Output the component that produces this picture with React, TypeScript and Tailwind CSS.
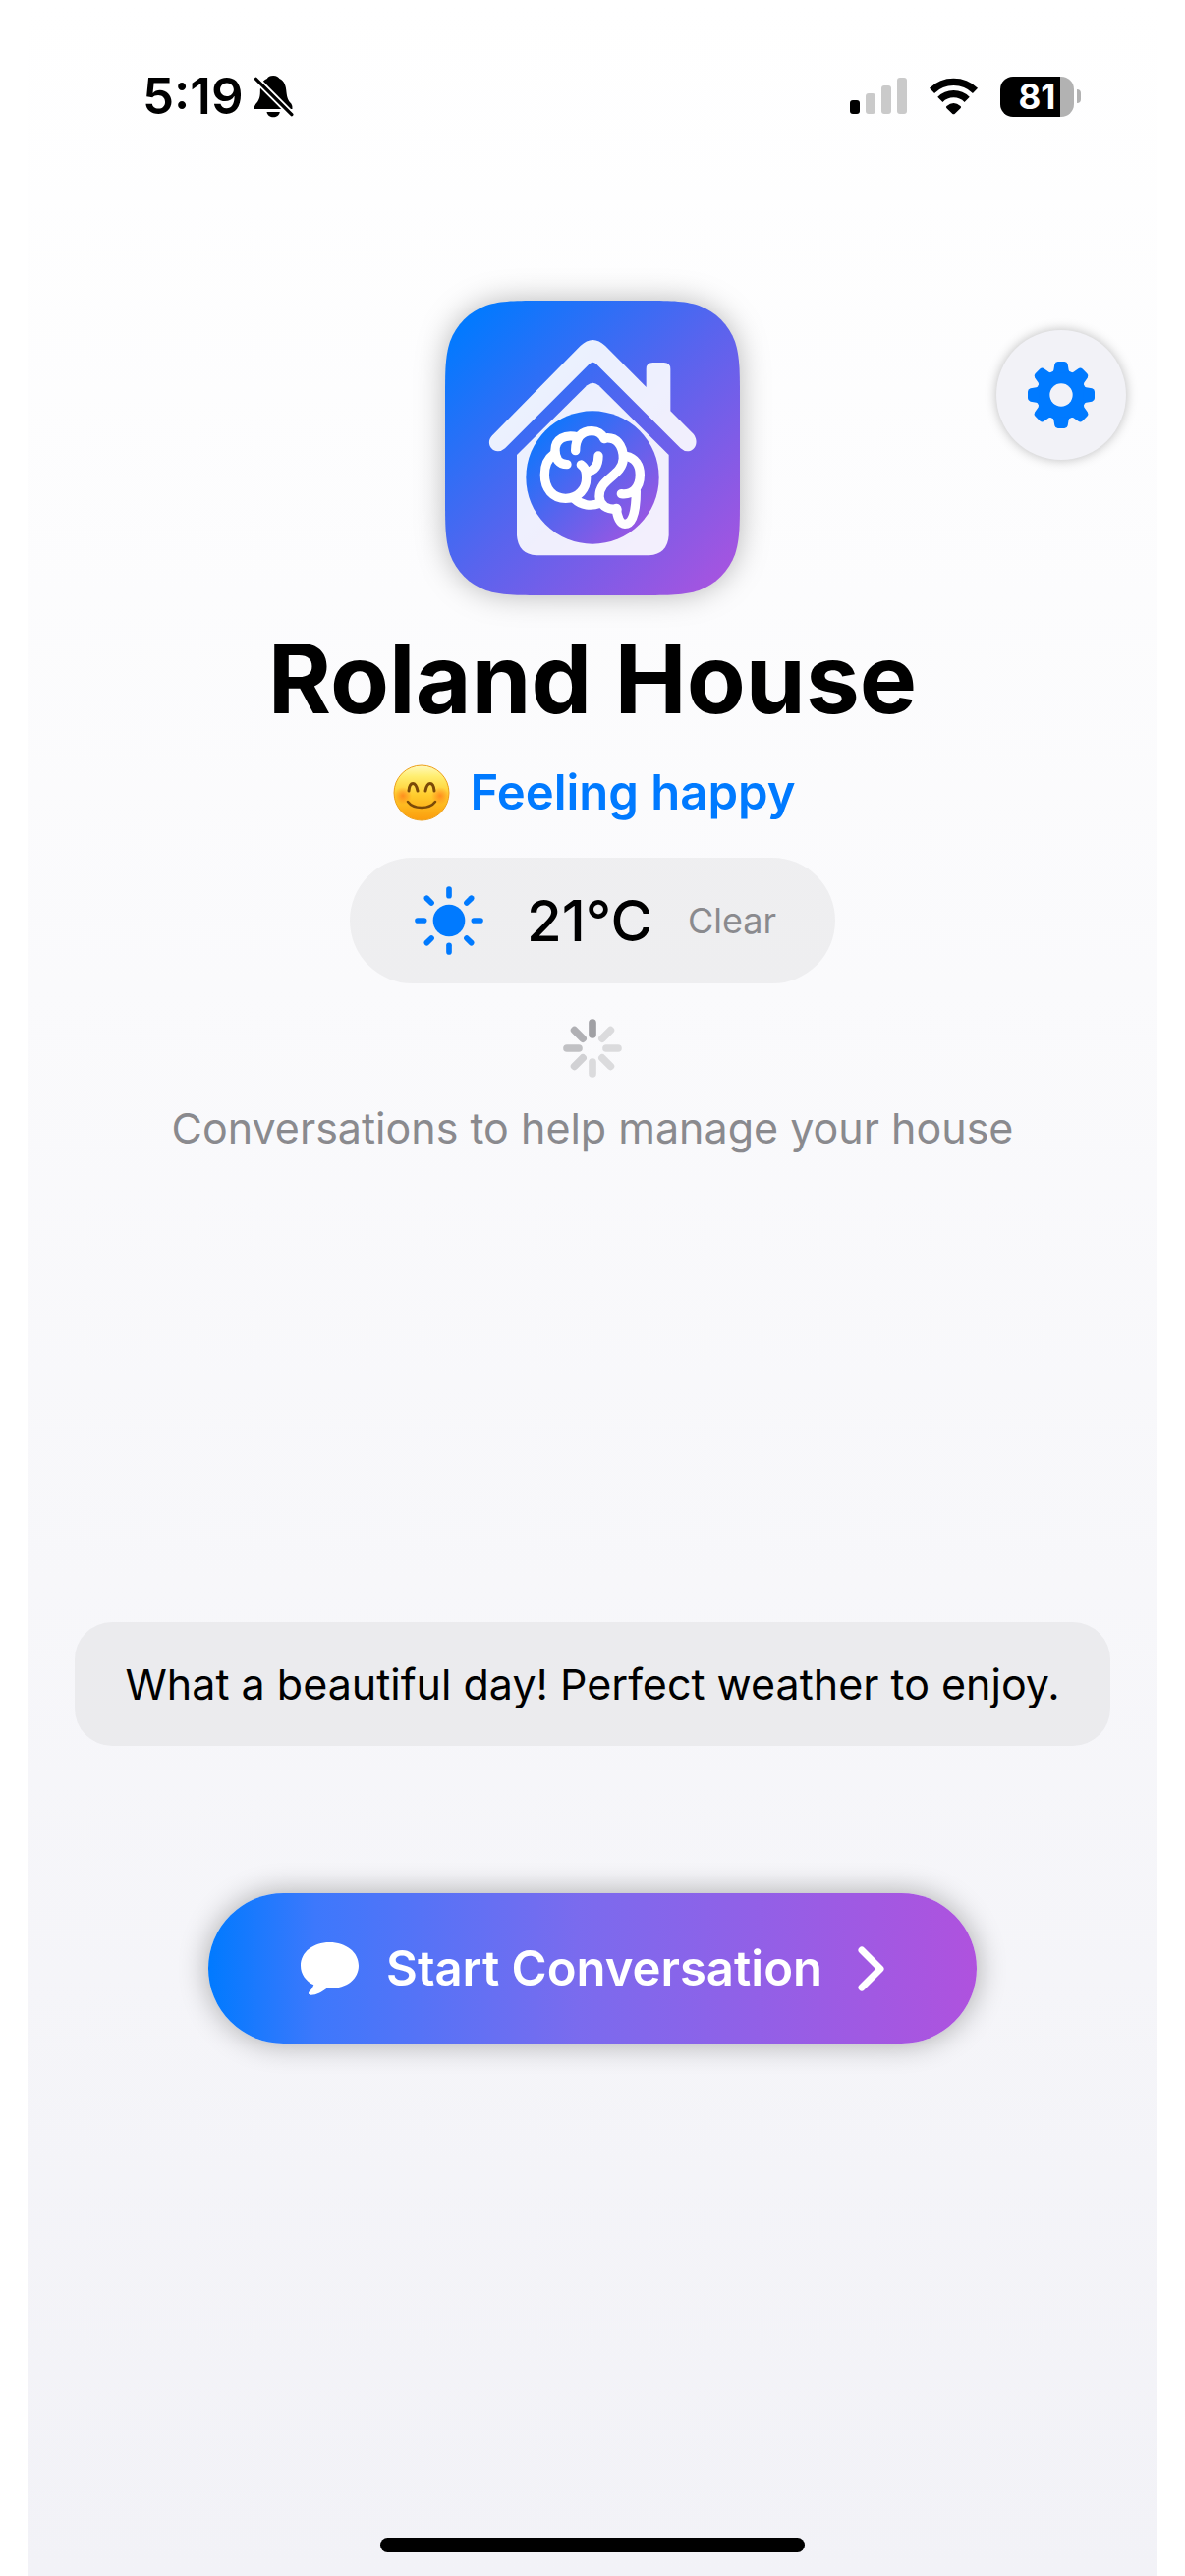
import React from "react";

/** Path of a rectangle with continuous (smoothed) corners of radius r. */
function smoothRect(x: number, y: number, w: number, h: number, r: number) {
  const steps = [
    [1.5287, 0],
    [1.0885, 0],
    [0.8684, 0],
    [0.6315, 0.0749],
    [0.3728, 0.1691],
    [0.1691, 0.3728],
    [0.0749, 0.6315],
    [0, 0.8684],
    [0, 1.0885],
    [0, 1.5287],
  ].map(([a, b]) => [a * r, b * r]);
  const corner = (pts: number[][]) => {
    const [p0, ...c] = pts.map(([a, b]) => a + " " + b);
    return `L${p0}C${c.slice(0, 3).join(" ")}C${c.slice(3, 6).join(" ")}C${c.slice(6, 9).join(" ")}`;
  };
  const back = [...steps].reverse();
  const tr = corner(steps.map(([a, b]) => [x + w - a, y + b]));
  const br = corner(back.map(([a, b]) => [x + w - a, y + h - b]));
  const bl = corner(steps.map(([a, b]) => [x + a, y + h - b]));
  const tl = corner(back.map(([a, b]) => [x + a, y + b]));
  return `M${x + w / 2} ${y}${tr}${br}${bl}${tl}Z`;
}

function BellSlash() {
  return (
    <svg viewBox="414 78 122 132" className="h-[44px] w-[41px]" role="img" aria-label="Silent mode">
      <path d="M474 81C484 81 490 86 493 90C508 97 513 113 514 132C516 150 520 158 529 167Q533 173 532 183H416Q414 176 420 168C430 158 434 148 434 130C434 112 438 97 455 90C458 85 464 81 474 81Z" />
      <path d="M454 192H494C492 202 484 208 474 208S456 202 454 192Z" />
      <path d="M418 88L534 204" stroke="#fff" strokeWidth="21" />
      <path d="M421 91L530 200" stroke="#000" strokeWidth="10" strokeLinecap="round" />
    </svg>
  );
}

function Signal() {
  return (
    <svg viewBox="0 0 58 38" className="h-[38px] w-[58px]" role="img" aria-label="Signal strength">
      <rect x="0" y="23" width="10" height="14" rx="3" />
      <g fill="#cacaca">
        <rect x="16" y="16" width="10" height="21" rx="3" />
        <rect x="32" y="8" width="10" height="29" rx="3" />
        <rect x="48" y="0" width="10" height="37" rx="3" />
      </g>
    </svg>
  );
}

function Wifi() {
  return (
    <svg viewBox="316 85 152 114" className="h-[38px] w-[51px]" role="img" aria-label="Wi-Fi">
      <g fill="none" stroke="#000" strokeWidth="22" strokeLinejoin="round">
        <path d="M326 125A95 95 0 0 1 458 125" />
        <path d="M351 152A58 58 0 0 1 433 152" />
      </g>
      <path d="M371 172Q392 154 413 172Q417 175 413 179L396 195Q392 199 388 195L371 179Q367 175 371 172Z" />
    </svg>
  );
}

function StatusBar() {
  return (
    <header className="flex items-center justify-between pt-[68px] pr-[78px] pl-[117px]">
      <div className="flex items-center gap-[10px]">
        <time className="text-[51px] leading-[60px] font-semibold">5:19</time>
        <BellSlash />
      </div>
      <div className="flex items-center gap-[22px]">
        <Signal />
        <Wifi />
        <div className="flex items-center gap-[3px]">
          <div className="flex h-[41px] w-[75px] items-center justify-center rounded-[13px] bg-[linear-gradient(90deg,#000_0_61px,#b2b2b2_61px)] text-[35px] leading-none font-bold text-white">
            81
          </div>
          <div className="h-[14px] w-[4px] rounded-r-full bg-[#b2b2b2]" />
        </div>
      </div>
    </header>
  );
}

function HouseLogo() {
  return (
    <svg
      viewBox="69 78 900 900"
      className="size-[300px] overflow-visible drop-shadow-[0_0_15px_rgba(0,0,0,0.28)]"
      role="img"
      aria-label="Roland House logo"
    >
      <defs>
        <linearGradient id="tile" x1="0" y1="0" x2="1" y2="1">
          <stop offset="0" stopColor="#007aff" />
          <stop offset="0.06" stopColor="#007aff" />
          <stop offset="0.5" stopColor="#5864ee" />
          <stop offset="1" stopColor="#af52de" />
        </linearGradient>
      </defs>
      <path d={smoothRect(69, 78, 900, 900, 198)} fill="url(#tile)" />
      <g fill="#fff" fillOpacity="0.9">
        <path d="M213 490L482 216Q520 180 558 216L683 342V287Q683 267 703 267H737Q757 267 757 287V415L827 485C846 510 831 538 809 538Q798 538 788 529L530 271Q520 261 510 271L252 529Q242 538 230 538C208 538 193 510 213 490Z" />
        <path d="M288 549L502 337Q520 321 538 337L752 549V795Q748 852 692 856H348Q292 852 288 795Z" />
      </g>
      <circle cx="519" cy="618" r="203" fill="url(#tile)" />
      <g fill="none" stroke="#fff" strokeWidth="28" strokeLinecap="round" strokeLinejoin="round">
        <path d="M400 548C380 562 373 586 373 610C373 652 398 682 437 682C478 682 500 650 500 620C500 602 499 590 484 579" />
        <path d="M500 600C525 600 537 582 537 552" />
        <path d="M475 495C435 484 405 501 405 535C405 562 417 578 441 578" />
        <path d="M467 536C467 492 488 476 517 476C534 476 548 486 555 500" />
        <path d="M555 498C592 492 613 520 613 560C610 615 540 620 540 676C541 702 562 716 594 715" />
        <path d="M621 553C650 558 664 582 664 610C664 650 640 672 607 668" />
        <path d="M465 684C485 703 515 707 540 697" />
        <path d="M592 712C594 740 604 760 618 760C642 760 652 722 652 660" />
      </g>
    </svg>
  );
}

function Gear() {
  return (
    <svg viewBox="-102 -102 204 204" className="size-[68px]" fill="#007aff" aria-hidden="true">
      <circle r="76" />
      {[0, 45, 90, 135, 180, 225, 270, 315].map((a) => (
        <path
          key={a}
          transform={`rotate(${a})`}
          d="M-32 -67Q-25 -69 -23 -76L-20 -94Q-18 -102 -10 -102H10Q18 -102 20 -94L23 -76Q25 -69 32 -67Z"
        />
      ))}
      <circle r="35" fill="#f2f2f7" />
    </svg>
  );
}

function SmilingFace() {
  return (
    <svg viewBox="0 0 58 58" className="size-[58px]" role="img" aria-label="Smiling face">
      <defs>
        <linearGradient id="face" x1="0" y1="0" x2="0" y2="1">
          <stop offset="0" stopColor="#fff9bd" />
          <stop offset="0.2" stopColor="#ffee70" />
          <stop offset="0.55" stopColor="#ffcb2b" />
          <stop offset="1" stopColor="#fb9c0c" />
        </linearGradient>
        <radialGradient id="cheek">
          <stop offset="0" stopColor="#ff7a1a" stopOpacity="0.75" />
          <stop offset="1" stopColor="#ff7a1a" stopOpacity="0" />
        </radialGradient>
      </defs>
      <circle cx="29" cy="29" r="28" fill="url(#face)" stroke="#eda01c" strokeWidth="1" />
      <circle cx="10" cy="32" r="9" fill="url(#cheek)" />
      <circle cx="48" cy="32" r="9" fill="url(#cheek)" />
      <g fill="none" stroke="#7a4a08" strokeLinecap="round">
        <path d="M16 27C17 17 23 17 25 27" strokeWidth="3" />
        <path d="M33 27C35 17 41 17 42 27" strokeWidth="3" />
        <path d="M15 38C21 46 37 46 43 38" strokeWidth="2.6" />
      </g>
    </svg>
  );
}

function Sun() {
  return (
    <svg viewBox="-105 -105 210 210" className="size-[70px]" role="img" aria-label="Sunny">
      <circle r="49" fill="#007aff" />
      {[0, 45, 90, 135, 180, 225, 270, 315].map((a) => (
        <path key={a} transform={`rotate(${a})`} d="M0 -96V-76" stroke="#007aff" strokeWidth="17" strokeLinecap="round" />
      ))}
    </svg>
  );
}

const spokes = ["#a0a0a4", "#dbdbdd", "#dbdbdd", "#dbdbdd", "#dbdbdd", "#d1d1d4", "#c1c1c4", "#b0b0b4"];

function Spinner() {
  return (
    <svg viewBox="-90 -90 180 180" className="size-[60px]" role="img" aria-label="Loading">
      {spokes.map((color, i) => (
        <path key={i} transform={`rotate(${i * 45})`} d="M0 -78V-42" stroke={color} strokeWidth="23" strokeLinecap="round" />
      ))}
    </svg>
  );
}

export default function App() {
  return (
    <div className="min-h-screen bg-white px-[28px] font-['Inter',sans-serif] text-black">
      <div className="flex min-h-screen flex-col bg-gradient-to-b from-white to-[#f2f2f7]">
        <StatusBar />

        <main className="flex flex-1 flex-col items-center">
          <div className="mt-[178px] grid w-full grid-cols-[1fr_auto_1fr]">
            <div className="col-start-2">
              <HouseLogo />
            </div>
            <button
              type="button"
              aria-label="Settings"
              className="mt-[30px] mr-8 flex size-[132px] items-center justify-center justify-self-end rounded-full bg-[#f2f2f7] shadow-[0_0_12px_rgba(0,0,0,0.26)]"
            >
              <Gear />
            </button>
          </div>

          <h1 className="mt-[25px] text-[98px] leading-[120px] font-bold">Roland House</h1>

          <p className="mt-[26px] flex items-center gap-5 pl-1 text-[49px] leading-[60px] font-semibold text-[#007aff]">
            <SmilingFace />
            Feeling happy
          </p>

          <div className="mt-9 flex h-[128px] items-center rounded-full bg-[#8e8e93]/11 pr-[60px] pl-[66px]">
            <Sun />
            <span className="ml-11 text-[58px] leading-[72px] font-medium">21°C</span>
            <span className="ml-9 text-[36px] leading-[44px] text-[#8a8a8e]">Clear</span>
          </div>

          <div className="mt-9">
            <Spinner />
          </div>

          <p className="mt-6 text-[43px] leading-[54px] text-[#8a8a8e]">Conversations to help manage your house</p>

          <div className="mt-[476px] self-stretch px-12">
            <p className="rounded-[38px] bg-[#8e8e93]/11 px-6 py-9 text-center text-[43px] leading-[54px]">
              What a beautiful day! Perfect weather to enjoy.
            </p>
          </div>

          <button
            type="button"
            className="mt-[150px] flex h-[153px] items-center rounded-full bg-[linear-gradient(90deg,#007aff,#3d78fc_14%,#7a6bee_48%,#af52de)] px-[94px] text-[49px] leading-[60px] font-semibold text-white shadow-[0_0_30px_rgba(0,0,0,0.32)]"
          >
            <svg viewBox="78 111 177 162" className="h-[54px] w-[59px]" fill="currentColor" aria-hidden="true">
              <path d="M166 111C216 111 255 141 255 182C255 222 220 252 166 252H157C142 263 124 273 108 272Q98 270 104 262Q114 254 118 241C94 230 78 208 78 182C78 141 116 111 166 111Z" />
            </svg>
            <span className="ml-7">Start Conversation</span>
            <svg viewBox="0 0 27 46" className="ml-9 h-[46px] w-[27px]" fill="none" stroke="currentColor" strokeWidth="7" strokeLinecap="round" strokeLinejoin="round" aria-hidden="true">
              <path d="M4 4L23 23L4 42" />
            </svg>
          </button>
        </main>

        <div className="mb-6 h-[15px] w-[432px] self-center rounded-full bg-black" />
      </div>
    </div>
  );
}
